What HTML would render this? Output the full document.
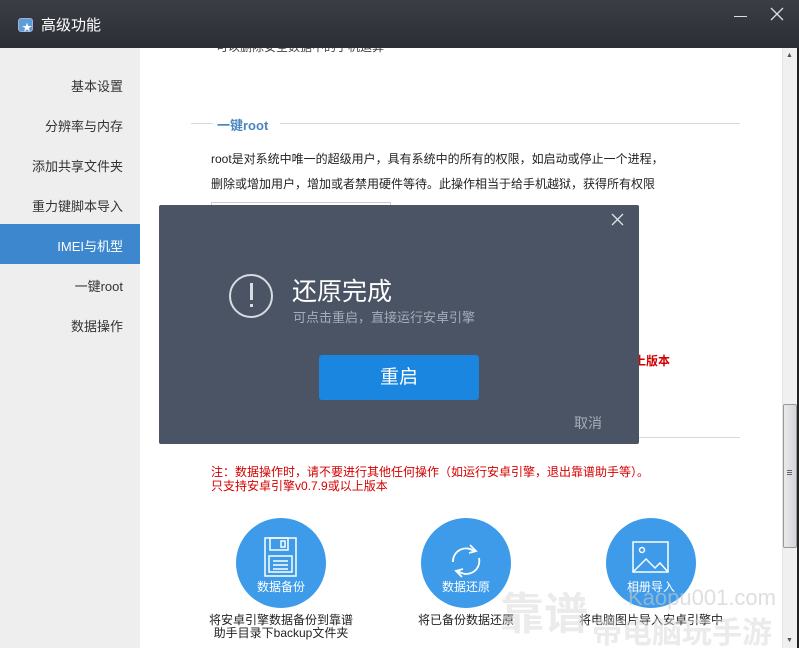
<!DOCTYPE html>
<html><head><meta charset="utf-8"><style>
*{margin:0;padding:0;box-sizing:border-box}
body{width:799px;height:648px;overflow:hidden;position:relative;background:#fff;font-family:"Liberation Sans","Noto Sans CJK SC",sans-serif;font-size:13px;color:#222}
.abs{position:absolute}
#title{left:0;top:0;width:799px;height:48px;background:linear-gradient(#3b3e45,#2b2e34);z-index:2}
#side{left:0;top:48px;width:140px;height:600px;background:#eeeeee}
.si{position:absolute;right:17px;font-size:13px;color:#333;text-align:right;white-space:nowrap}
.t{position:absolute;white-space:nowrap;font-size:12px;color:#222}
.red{color:#d40000;font-size:12px}
.circ{position:absolute;width:90px;height:90px;border-radius:50%;background:#3d9be9;color:#fff;text-align:center}
.lbl{position:absolute;font-size:12px;color:#222;text-align:center;line-height:13px;white-space:nowrap}
</style></head><body>
<div id="title" class="abs">
  <div class="abs" style="left:18px;top:18px;width:15px;height:14px;border-radius:3px;background:#5a9fd8;border:1px solid #aad"></div>
  <div class="abs" style="left:22px;top:19px;color:#fff;font-size:10px">★</div>
  <div class="abs" style="left:41px;top:14px;color:#fff;font-size:15px">高级功能</div>
  <div class="abs" style="left:734px;top:16px;width:13px;height:1px;background:#ddd"></div>
  <svg class="abs" style="left:770px;top:7px" width="14" height="14"><path d="M1 1L13 13M13 1L1 13" stroke="#ddd" stroke-width="1.3"/></svg>
</div>
<div id="side" class="abs">
  <div class="si" style="top:28px">基本设置</div>
  <div class="si" style="top:68px">分辨率与内存</div>
  <div class="si" style="top:108px">添加共享文件夹</div>
  <div class="si" style="top:148px">重力键脚本导入</div>
  <div class="abs" style="left:0;top:176px;width:140px;height:40px;background:#3d87cf"></div>
  <div class="si" style="top:188px;color:#fff">IMEI与机型</div>
  <div class="si" style="top:228px">一键root</div>
  <div class="si" style="top:268px">数据操作</div>
</div>
<div class="t" style="left:216px;top:38px;color:#444;font-size:12px;z-index:1">可以删除安全数据中的手机运算</div>
<div class="abs" style="left:191px;top:123px;width:22px;height:1px;background:#d0dbe6"></div>
<div class="abs" style="left:280px;top:123px;width:460px;height:1px;background:#d0dbe6"></div>
<div class="t" style="left:217px;top:115px;color:#4a86c0;font-weight:bold;font-size:13px">一键root</div>
<div class="t" style="left:211px;top:150px">root是对系统中唯一的超级用户，具有系统中的所有的权限，如启动或停止一个进程，</div>
<div class="t" style="left:211px;top:175px">删除或增加用户，增加或者禁用硬件等待。此操作相当于给手机越狱，获得所有权限</div>
<div class="abs" style="left:211px;top:202px;width:180px;height:20px;border:1px solid #ccc"></div>
<div class="t red" style="left:634px;top:352px;font-weight:bold">上版本</div>
<div class="abs" style="left:639px;top:437px;width:101px;height:1px;background:#d0dbe6"></div>
<div class="t red" style="left:211px;top:463px">注：数据操作时，请不要进行其他任何操作（如运行安卓引擎，退出靠谱助手等）。</div>
<div class="t red" style="left:211px;top:477px">只支持安卓引擎v0.7.9或以上版本</div>

<div class="circ" style="left:236px;top:518px">
  <svg width="90" height="90" style="position:absolute;left:0;top:0"><g fill="none" stroke="#fff" stroke-width="1.5"><rect x="29" y="20" width="31" height="38"/><rect x="34" y="20" width="18" height="12"/><rect x="45" y="23" width="4" height="6"/><rect x="33" y="38" width="23" height="16"/><path d="M37 43h15M37 47h15M37 51h15"/></g></svg>
  <div style="position:absolute;left:0;top:60px;width:90px;font-size:12px">数据备份</div></div>
<div class="circ" style="left:421px;top:518px">
  <svg width="90" height="90" style="position:absolute;left:0;top:0"><g fill="none" stroke="#fff" stroke-width="1.8"><path d="M32 44a13 13 0 0 1 22-10M58 40a13 13 0 0 1-22 12"/><path d="M49 27l6 6-7 2M41 59l-6-6 7-2"/></g></svg>
  <div style="position:absolute;left:0;top:60px;width:90px;font-size:12px">数据还原</div></div>
<div class="circ" style="left:606px;top:518px">
  <svg width="90" height="90" style="position:absolute;left:0;top:0"><g fill="none" stroke="#fff" stroke-width="1.5"><rect x="27" y="24" width="35" height="30"/><circle cx="36" cy="32" r="2.5"/><path d="M27 54l13-13 9 9 5-5 8 9"/></g></svg>
  <div style="position:absolute;left:0;top:60px;width:90px;font-size:12px">相册导入</div></div>
<div class="lbl" style="left:206px;top:614px;width:150px">将安卓引擎数据备份到靠谱<br>助手目录下backup文件夹</div>
<div class="lbl" style="left:406px;top:614px;width:120px">将已备份数据还原</div>
<div class="lbl" style="left:576px;top:614px;width:150px">将电脑图片导入安卓引擎中</div>
<div class="t" style="left:500px;top:578px;font-size:44px;color:rgba(215,215,215,.5);font-weight:bold">靠谱</div>
<div class="t" style="left:628px;top:585px;font-size:22px;color:rgba(200,200,200,.6)">Kaopu001.com</div>
<div class="t" style="left:592px;top:608px;font-size:30px;color:rgba(215,215,215,.5);font-weight:bold">带电脑玩手游</div>

<div class="abs" style="left:782px;top:48px;width:17px;height:600px;background:#f0f0f0;border-left:1px solid #e4e4e4"></div>
<div class="abs" style="left:797px;top:48px;width:2px;height:600px;background:#222"></div>
<div class="abs" style="left:786px;top:52px;font-size:7px;color:#555">▲</div>
<div class="abs" style="left:786px;top:637px;font-size:7px;color:#555">▼</div>
<div class="abs" style="left:783px;top:404px;width:14px;height:144px;background:linear-gradient(90deg,#eaeaea,#d4d4dc);border:1px solid #999;border-radius:2px"></div>
<div class="abs" style="left:787px;top:470px;width:5px;height:1px;background:#666;box-shadow:0 2px #666,0 4px #666"></div>

<div class="abs" style="left:159px;top:205px;width:480px;height:239px;background:#4a5464;border-radius:2px"></div>
<svg class="abs" style="left:611px;top:213px" width="13" height="13"><path d="M1 1L12 12M12 1L1 12" stroke="#e0e4ea" stroke-width="1.3"/></svg>
<div class="abs" style="left:229px;top:274px;width:44px;height:44px;border:2.5px solid #d8dce2;border-radius:50%"></div>
<div class="abs" style="left:250px;top:283px;width:2.5px;height:17px;background:#d8dce2"></div>
<div class="abs" style="left:250px;top:304px;width:2.5px;height:3px;background:#d8dce2"></div>
<div class="t" style="left:292px;top:272px;font-size:25px;color:#fff">还原完成</div>
<div class="t" style="left:293px;top:307px;font-size:13px;color:#a5adb9">可点击重启，直接运行安卓引擎</div>
<div class="abs" style="left:319px;top:355px;width:160px;height:45px;background:#1a86e0;border-radius:3px;color:#fff;font-size:19px;text-align:center;line-height:45px">重启</div>
<div class="t" style="left:574px;top:413px;font-size:14px;color:#a5adb9">取消</div>
</body></html>
